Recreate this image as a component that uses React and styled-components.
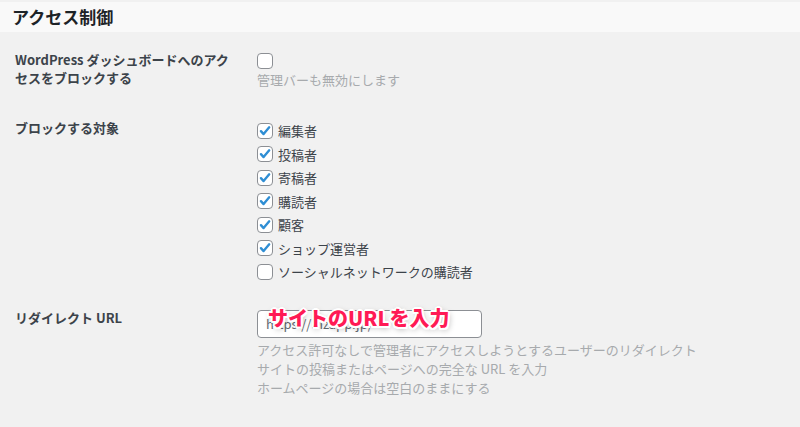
import React from 'react'
import styled, { createGlobalStyle } from 'styled-components'

const GlobalStyle = createGlobalStyle`
  body {
    margin: 0;
    background: #f1f1f1;
    font-family: "Noto Sans CJK JP", "Noto Sans", sans-serif;
    color: #3c434a;
  }
`

const Page = styled.div`
  width: 800px;
  height: 427px;
  overflow: hidden;
  padding-top: 2px;
  box-sizing: border-box;
`

const Header = styled.div`
  height: 30px;
  background: #f9f9f9;
  display: flex;
  align-items: center;
  padding-left: 12px;
`

const Title = styled.h2`
  margin: 0;
  font-size: 17px;
  font-weight: 700;
  color: #1d2327;
  line-height: 30px;
`

const Form = styled.div`
  padding: 4px 0 0 15px;
`

const Row = styled.div`
  display: grid;
  grid-template-columns: 242px 1fr;
  padding-top: ${p => p.$pt ?? 15}px;
  padding-bottom: 15px;
`

const Label = styled.div`
  font-size: 13px;
  font-weight: 700;
  line-height: 18px;
  color: #3c434a;
  width: 220px;
`

const Field = styled.div`
  padding-top: ${p => p.$pt ?? 0}px;
`

const Box = styled.span`
  width: 16px;
  height: 16px;
  box-sizing: border-box;
  border: 1px solid #8c8f94;
  border-radius: 4px;
  background: #fff;
  display: flex;
  align-items: center;
  justify-content: center;
  flex-shrink: 0;
`

const Option = styled.label`
  display: flex;
  align-items: center;
  gap: 5px;
  height: 23.5px;
  font-size: 13px;
  color: #3c434a;
`

const Description = styled.p`
  margin: ${p => p.$mt ?? 2}px 0 0;
  font-size: 13px;
  line-height: ${p => p.$lh ?? 18}px;
  color: #a7aaad;
`

const InputWrap = styled.div`
  position: relative;
  width: 225px;
  margin-top: 1px;
`

const TextInput = styled.div`
  height: 28px;
  box-sizing: border-box;
  border: 1px solid #8c8f94;
  border-radius: 4px;
  background: #fff;
  padding: 0 8px;
  font-size: 13px;
  line-height: 26px;
  color: #646970;
  white-space: nowrap;
  overflow: hidden;
`

const Callout = styled.span`
  position: absolute;
  left: 11px;
  top: -5px;
  font-size: 20px;
  font-weight: 900;
  line-height: 26px;
  color: #ff1a55;
  white-space: nowrap;
  text-shadow:
    2px 0 0 #fff, -2px 0 0 #fff, 0 2px 0 #fff, 0 -2px 0 #fff,
    1.5px 1.5px 0 #fff, -1.5px -1.5px 0 #fff, 1.5px -1.5px 0 #fff, -1.5px 1.5px 0 #fff,
    1px 2px 6px rgba(0, 0, 0, 0.4);
`

const Checkbox = ({ checked }) => (
  <Box>
    {checked && (
      <svg width="14" height="14" viewBox="0 0 20 20">
        <path d="M4.2 10.2l3.8 4.2L16 4.8" fill="none" stroke="#2f8ed4" strokeWidth="3.4" strokeLinecap="round" strokeLinejoin="round" />
      </svg>
    )}
  </Box>
)

const roles = [
  { name: '編集者', on: true },
  { name: '投稿者', on: true },
  { name: '寄稿者', on: true },
  { name: '購読者', on: true },
  { name: '顧客', on: true },
  { name: 'ショップ運営者', on: true },
  { name: 'ソーシャルネットワークの購読者', on: false },
]

const App = () => {
  return (
    <Page>
      <GlobalStyle />
      <Header>
        <Title>アクセス制御</Title>
      </Header>
      <Form>
        <Row>
          <Label>WordPress ダッシュボードへのアクセスをブロックする</Label>
          <Field $pt={2}>
            <Checkbox checked={false} />
            <Description>管理バーも無効にします</Description>
          </Field>
        </Row>
        <Row>
          <Label>ブロックする対象</Label>
          <Field>
            {roles.map(r => (
              <Option key={r.name}>
                <Checkbox checked={r.on} />
                {r.name}
              </Option>
            ))}
          </Field>
        </Row>
        <Row $pt={10}>
          <Label>リダイレクト URL</Label>
          <Field>
            <InputWrap>
              <TextInput>https://bizapp.jp/</TextInput>
              <Callout>サイトのURLを入力</Callout>
            </InputWrap>
            <Description $mt={2} $lh={19}>
              アクセス許可なしで管理者にアクセスしようとするユーザーのリダイレクト<br />
              サイトの投稿またはページへの完全な URL を入力<br />
              ホームページの場合は空白のままにする
            </Description>
          </Field>
        </Row>
      </Form>
    </Page>
  )
}

export default App
